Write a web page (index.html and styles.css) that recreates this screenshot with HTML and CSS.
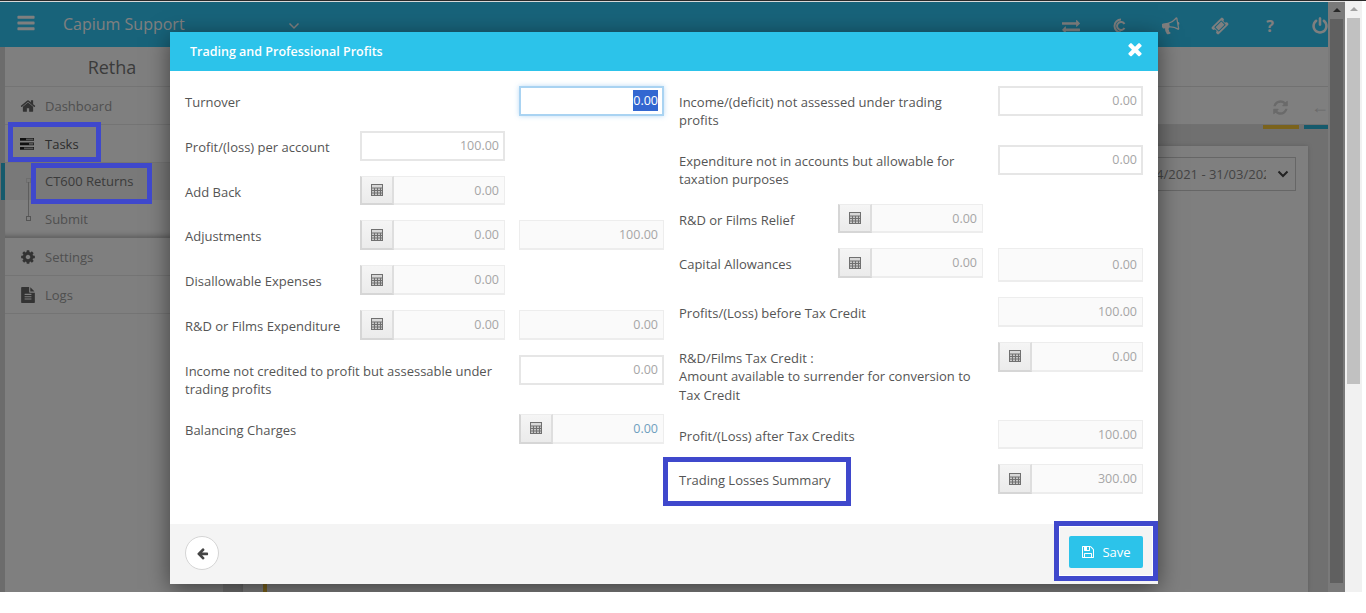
FILE: index.html
```html
<!DOCTYPE html>
<html lang="en">
<head>
<meta charset="utf-8">
<title>Trading and Professional Profits</title>
<link rel="stylesheet" href="styles.css">
</head>
<body>
<svg class="sprite" xmlns="http://www.w3.org/2000/svg">
  <symbol id="i-bars" viewBox="0 0 1792 1792"><path d="M1664 1344v128q0 26-19 45t-45 19h-1408q-26 0-45-19t-19-45v-128q0-26 19-45t45-19h1408q26 0 45 19t19 45zm0-512v128q0 26-19 45t-45 19h-1408q-26 0-45-19t-19-45v-128q0-26 19-45t45-19h1408q26 0 45 19t19 45zm0-512v128q0 26-19 45t-45 19h-1408q-26 0-45-19t-19-45v-128q0-26 19-45t45-19h1408q26 0 45 19t19 45z"/></symbol>
  <symbol id="i-home" viewBox="0 0 1792 1792"><path d="M1472 992v480q0 26-19 45t-45 19h-384v-384h-256v384h-384q-26 0-45-19t-19-45v-480q0-1 .5-3t.5-3l575-474 575 474q1 2 1 6zm223-69l-62 74q-8 9-21 11h-3q-13 0-21-7l-692-577-692 577q-12 8-24 7-13-2-21-11l-62-74q-8-10-7-23.5t11-21.5l719-599q32-26 76-26t76 26l244 204v-195q0-14 9-23t23-9h192q14 0 23 9t9 23v408l219 182q10 8 11 21.5t-7 23.5z"/></symbol>
  <symbol id="i-cog" viewBox="0 0 1792 1792"><path d="M1152 896q0-106-75-181t-181-75-181 75-75 181 75 181 181 75 181-75 75-181zm512-109v222q0 12-8 23t-20 13l-185 28q-19 54-39 91 35 50 107 138 10 12 10 25t-9 23q-27 37-99 108t-94 71q-12 0-26-9l-138-108q-44 23-91 38-16 136-29 186-7 28-36 28h-222q-14 0-24.5-8.5t-11.5-21.5l-28-184q-49-16-90-37l-141 107q-10 9-25 9-14 0-25-11-126-114-165-168-7-10-7-23 0-12 8-23 15-21 51-66.5t54-70.5q-27-50-41-99l-183-27q-13-2-21-12.5t-8-23.5v-222q0-12 8-23t19-13l186-28q14-46 39-92-40-57-107-138-10-12-10-24 0-10 9-23 26-36 98.5-107.5t94.5-71.5q13 0 26 10l138 107q44-23 91-38 16-136 29-186 7-28 36-28h222q14 0 24.5 8.5t11.5 21.5l28 184q49 16 90 37l142-107q9-9 24-9 13 0 25 10 129 119 165 170 7 8 7 22 0 12-8 23-15 21-51 66.5t-54 70.5q26 50 41 98l183 28q13 2 21 12.5t8 23.5z"/></symbol>
  <symbol id="i-file" viewBox="0 0 1792 1792"><path d="M1596 476q14 14 28 36h-472v-472q22 14 36 28zm-476 164h544v1056q0 40-28 68t-68 28h-1344q-40 0-68-28t-28-68v-1600q0-40 28-68t68-28h800v544q0 40 28 68t68 28zm160 736v-64q0-14-9-23t-23-9h-704q-14 0-23 9t-9 23v64q0 14 9 23t23 9h704q14 0 23-9t9-23zm0-256v-64q0-14-9-23t-23-9h-704q-14 0-23 9t-9 23v64q0 14 9 23t23 9h704q14 0 23-9t9-23zm0-256v-64q0-14-9-23t-23-9h-704q-14 0-23 9t-9 23v64q0 14 9 23t23 9h704q14 0 23-9t9-23z"/></symbol>
  <symbol id="i-left" viewBox="0 0 1792 1792"><path d="M1664 896v128q0 53-32.5 90.5t-84.5 37.5h-704l293 294q38 36 38 90t-38 90l-75 76q-37 37-90 37-52 0-91-37l-651-652q-37-37-37-90 0-52 37-91l651-650q38-38 91-38 52 0 90 38l75 74q38 38 38 91t-38 91l-293 293h704q52 0 84.5 37.5t32.5 90.5z"/></symbol>
  <symbol id="i-times" viewBox="0 0 1792 1792"><path d="M1490 1322q0 40-28 68l-136 136q-28 28-68 28t-68-28l-294-294-294 294q-28 28-68 28t-68-28l-136-136q-28-28-28-68t28-68l294-294-294-294q-28-28-28-68t28-68l136-136q28-28 68-28t68 28l294 294 294-294q28-28 68-28t68 28l136 136q28 28 28 68t-28 68l-294 294 294 294q28 28 28 68z"/></symbol>
  <symbol id="i-power" viewBox="0 0 1792 1792"><path d="M1664 896q0 156-61 298t-164 245-245 164-298 61-298-61-245-164-164-245-61-298q0-182 80.5-343t226.5-270q43-32 95.5-25t83.5 50q32 42 24.5 94.5t-49.5 84.5q-98 74-151.5 181t-53.5 228q0 104 40.5 198.5t109.5 163.5 163.5 109.5 198.5 40.5 198.5-40.5 163.5-109.5 109.5-163.5 40.5-198.5q0-121-53.5-228t-151.5-181q-42-32-49.5-84.5t24.5-94.5q31-43 84-50t95 25q146 109 226.5 270t80.5 343zm-640-768v640q0 52-38 90t-90 38-90-38-38-90v-640q0-52 38-90t90-38 90 38 38 90z"/></symbol>
  <symbol id="i-floppy" viewBox="0 0 1792 1792"><path d="M512 1536h768v-384h-768v384zm896 0h128v-896q0-14-10-38.5t-20-34.5l-281-281q-10-10-34-20t-39-10v416q0 40-28 68t-68 28h-576q-40 0-68-28t-28-68v-416h-128v1280h128v-416q0-40 28-68t68-28h832q40 0 68 28t28 68v416zm-384-928v-320q0-13-9.5-22.5t-22.5-9.5h-192q-13 0-22.5 9.5t-9.5 22.5v320q0 13 9.5 22.5t22.5 9.5h192q13 0 22.5-9.5t9.5-22.5zm640 32v928q0 40-28 68t-68 28h-1344q-40 0-68-28t-28-68v-1344q0-40 28-68t68-28h928q40 0 88 20t76 48l280 280q28 28 48 76t20 88z"/></symbol>
  <symbol id="i-refresh" viewBox="0 0 1792 1792"><path d="M1639 1056q0 5-1 7-64 268-268 434.5t-478 166.5q-146 0-282.5-55t-243.5-157l-129 129q-19 19-45 19t-45-19-19-45v-448q0-26 19-45t45-19h448q26 0 45 19t19 45-19 45l-137 137q71 66 161 102t187 36q134 0 250-65t186-179q11-17 53-117 8-23 30-23h192q13 0 22.5 9.5t9.5 22.5zm25-800v448q0 26-19 45t-45 19h-448q-26 0-45-19t-19-45 19-45l138-138q-148-137-349-137-134 0-250 65t-186 179q-11 17-53 117-8 23-30 23h-199q-13 0-22.5-9.5t-9.5-22.5v-7q65-268 270-434.5t480-166.5q146 0 284 55.5t245 156.5l130-129q19-19 45-19t45 19 19 45z"/></symbol>
  <symbol id="i-exchange" viewBox="0 0 1792 1792"><path d="M1792 1184v192q0 13-9.5 22.5t-22.5 9.5h-1376v192q0 13-9.5 22.5t-22.5 9.5q-12 0-24-10l-319-320q-9-9-9-22 0-14 9-23l320-320q9-9 23-9 13 0 22.5 9.5t9.5 22.5v192h1376q13 0 22.5 9.5t9.5 22.5zm0-544q0 14-9 23l-320 320q-9 9-23 9-13 0-22.5-9.5t-9.5-22.5v-192h-1376q-13 0-22.5-9.5t-9.5-22.5v-192q0-13 9.5-22.5t22.5-9.5h1376v-192q0-14 9-23t23-9q12 0 24 10l319 319q9 9 9 23z"/></symbol>
  <symbol id="i-bullhorn" viewBox="0 0 1792 1792"><path d="M1664 640q53 0 90.5 37.5t37.5 90.5-37.5 90.5-90.5 37.5v384q0 52-38 90t-90 38q-417-347-812-380-58 19-91 66t-31 100.5 40 92.5q-20 33-23 65.5t6 58 33.5 55 48 50 61.5 50.5q-29 58-111.5 83t-168.5 11.5-132-55.5q-7-23-29.500-87.500t-32-94.500-23-89-15-101 3.500-98.500 22-110.500h-122q-66 0-113-47t-47-113v-192q0-66 47-113t113-47h480q435 0 896-384 52 0 90 38t38 90v384zm-128 604v-954q-394 302-768 343v270q377 42 768 341z"/></symbol>
  <symbol id="i-ticket" viewBox="0 0 1792 1792"><path d="M1024 452l316 316-572 572-316-316zm-211 979l618-618q19-19 19-45t-19-45l-362-362q-18-18-45-18t-45 18l-618 618q-19 19-19 45t19 45l362 362q18 18 45 18t45-18zm889-637l-907 908q-37 37-90.500 37t-90.500-37l-126-126q56-56 56-136t-56-136-136-56-136 56l-125-126q-37-37-37-90.500t37-90.500l907-906q37-37 90.500-37t90.500 37l125 125q-56 56-56 136t56 136 136 56 136-56l126 125q37 37 37 90.500t-37 90.500z"/></symbol>
  <symbol id="i-calc" viewBox="0 0 14 14"><path class="calc-body" d="M1 1h12v12H1z"/><path class="calc-top" d="M2 2h10v2.500H2z"/><path class="calc-keys" d="M2 5.500h2v1.500H2zM5 5.500h2v1.500H5zM8 5.500h2v1.500H8zM11 5.500h1v1.500h-1zM2 8h2v1.500H2zM5 8h2v1.500H5zM8 8h2v1.500H8zM11 8h1v1.500h-1zM2 10.500h2V12H2zM5 10.500h2V12H5zM8 10.500h2V12H8zM11 10.500h1V12h-1z"/></symbol>
</svg>

<div class="window">
  <div class="app">
    <div class="page">
      <header class="topbar">
        <svg class="ic ic-bars"><use href="#i-bars"/></svg>
        <span class="brand">Capium Support</span>
        <svg class="chev" viewBox="0 0 12 8"><path d="M1.500 1.500 6 6l4.500-4.500"/></svg>
        <nav class="top-icons">
          <svg class="ic ic-top"><use href="#i-exchange"/></svg>
          <svg class="ic ic-top copy" viewBox="0 0 18 18"><path d="M9 2.500a6.500 6.500 0 1 0 0 13M12.500 7A4 4 0 1 0 12.500 11"/></svg>
          <svg class="ic ic-top horn"><use href="#i-bullhorn"/></svg>
          <svg class="ic ic-top"><use href="#i-ticket"/></svg>
          <span class="qmark">?</span>
          <svg class="ic ic-top"><use href="#i-power"/></svg>
        </nav>
      </header>
      <div class="main">
        <aside class="sidebar">
          <div class="client">Retha</div>
          <a class="nav"><svg class="ic ic-nav"><use href="#i-home"/></svg>Dashboard</a>
          <a class="nav nav-dark"><svg class="tasks" viewBox="0 0 14 12"><path class="tasks-a" d="M0 0h14v2.800H0zM0 4.500h14v2.800H0zM0 9h14v2.800H0z"/><path class="tasks-b" d="M6 .6h7.400v1.600H6zM9 5.100h4.400v1.600H9zM4 9.600h9.400v1.600H4z"/></svg>Tasks</a>
          <div class="sub">
            <a class="sub-item sub-active"><i class="dot"></i>CT600 Returns</a>
            <a class="sub-item"><i class="dot"></i>Submit</a>
          </div>
          <a class="nav"><svg class="ic ic-nav"><use href="#i-cog"/></svg>Settings</a>
          <a class="nav"><svg class="ic ic-nav"><use href="#i-file"/></svg>Logs</a>
        </aside>
        <section class="content">
          <div class="band"></div>
          <div class="toolbar">
            <svg class="ic ic-tool"><use href="#i-refresh"/></svg>
            <span class="tool-arrow">&#8592;</span>
          </div>
          <div class="tabs"><i class="tab tab-y"></i><i class="tab tab-b"></i></div>
          <div class="card">
            <div class="period"><span class="period-text">01/04/2021 - 31/03/2022</span><svg class="period-chev" viewBox="0 0 12 8"><path d="M1.500 1.500 6 6l4.500-4.500"/></svg></div>
            <i class="timeline"></i>
          </div>
        </section>
      </div>
    </div>
    <div class="inner-scroll"><i class="up"></i><i class="thumb"></i></div>
    <div class="backdrop"></div>

    <div class="modal">
      <div class="modal-head">
        <h2>Trading and Professional Profits</h2>
        <svg class="ic ic-close"><use href="#i-times"/></svg>
      </div>
      <div class="modal-body">
        <div class="col col-l">
          <div class="row"><span class="lbl">Turnover</span><div class="field focus c3"><span class="sel">0.00</span></div></div>
          <div class="row"><span class="lbl">Profit/(loss) per account</span><div class="field c2">100.00</div></div>
          <div class="row"><span class="lbl">Add Back</span><div class="group c2"><button class="calc"><svg class="ic-calc"><use href="#i-calc"/></svg></button><div class="field ro">0.00</div></div></div>
          <div class="row"><span class="lbl">Adjustments</span><div class="group c2"><button class="calc"><svg class="ic-calc"><use href="#i-calc"/></svg></button><div class="field ro">0.00</div></div><div class="field ro c3">100.00</div></div>
          <div class="row"><span class="lbl">Disallowable Expenses</span><div class="group c2"><button class="calc"><svg class="ic-calc"><use href="#i-calc"/></svg></button><div class="field ro">0.00</div></div></div>
          <div class="row"><span class="lbl">R&amp;D or Films Expenditure</span><div class="group c2"><button class="calc"><svg class="ic-calc"><use href="#i-calc"/></svg></button><div class="field ro">0.00</div></div><div class="field ro c3">0.00</div></div>
          <div class="row"><span class="lbl wide">Income not credited to profit but assessable under trading profits</span><div class="field c3">0.00</div></div>
          <div class="row"><span class="lbl">Balancing Charges</span><div class="group c3"><button class="calc"><svg class="ic-calc"><use href="#i-calc"/></svg></button><div class="field ro blue">0.00</div></div></div>
        </div>
        <div class="col col-r">
          <div class="row"><span class="lbl wide">Income/(deficit) not assessed under trading profits</span><div class="field c3">0.00</div></div>
          <div class="row"><span class="lbl wide">Expenditure not in accounts but allowable for taxation purposes</span><div class="field c3">0.00</div></div>
          <div class="row"><span class="lbl">R&amp;D or Films Relief</span><div class="group c2"><button class="calc"><svg class="ic-calc"><use href="#i-calc"/></svg></button><div class="field ro">0.00</div></div></div>
          <div class="row"><span class="lbl">Capital Allowances</span><div class="group c2"><button class="calc"><svg class="ic-calc"><use href="#i-calc"/></svg></button><div class="field ro">0.00</div></div><div class="field ro tall c3">0.00</div></div>
          <div class="row"><span class="lbl wide">Profits/(Loss) before Tax Credit</span><div class="field ro c3">100.00</div></div>
          <div class="row"><span class="lbl wide">R&amp;D/Films Tax Credit :<br>Amount available to surrender for conversion to Tax Credit</span><div class="group c3"><button class="calc"><svg class="ic-calc"><use href="#i-calc"/></svg></button><div class="field ro">0.00</div></div></div>
          <div class="row"><span class="lbl wide">Profit/(Loss) after Tax Credits</span><div class="field ro c3">100.00</div></div>
          <div class="row"><span class="lbl wide">Trading Losses Summary</span><div class="group c3"><button class="calc"><svg class="ic-calc"><use href="#i-calc"/></svg></button><div class="field ro">300.00</div></div></div>
        </div>
      </div>
      <div class="modal-foot">
        <button class="back"><svg class="ic ic-back"><use href="#i-left"/></svg></button>
        <button class="save"><svg class="ic ic-save"><use href="#i-floppy"/></svg>Save</button>
      </div>
    </div>

    <i class="mark mark-tasks"></i>
    <i class="mark mark-ct600"></i>
    <i class="mark mark-losses"></i>
    <i class="mark mark-save"></i>
  </div>
  <div class="outer-scroll"><i class="up"></i><i class="thumb"></i></div>
</div>
</body>
</html>
```

FILE: styles.css
```css
* { box-sizing: border-box; }
html, body { margin: 0; height: 613px; overflow: hidden; background: #fff; }
body { font-family: "Open Sans", "Liberation Sans", sans-serif; font-size: 13px; color: #555; }
.sprite { display: none; }
i { display: block; font-style: normal; }

.window { display: flex; height: 592px; padding-right: 4px; border-top: 1px solid #2a2a2a; }
.app { position: relative; width: 1345px; flex: none; border-top: 1px solid #d8d8d8; display: flex; overflow: hidden; }
.page { width: 1328px; flex: none; display: flex; flex-direction: column; min-height: 0; }

.ic { fill: currentColor; display: block; flex: none; }

/* top bar */
.topbar { height: 45px; flex: none; background: #30c6f4; color: #fff; display: flex; align-items: center; }
.ic-bars { width: 20px; height: 20px; margin: -3px 0 0 16px; }
.brand { font-size: 16px; margin: -2px 0 0 27px; width: 225px; }
.chev { width: 12px; height: 8px; fill: none; stroke: #fff; stroke-width: 1.500; margin-top: 2px; }
.top-icons { margin-left: auto; margin-right: -1px; margin-top: 2px; display: flex; align-items: center; width: 267px; justify-content: space-between; color: #fff; }
.ic-top { width: 18px; height: 18px; }
.horn { transform: rotate(-10deg); }
.copy { fill: none; stroke: #fff; stroke-width: 2; }
.qmark { font-weight: 700; font-size: 16px; width: 18px; text-align: center; }

/* page under the dialog */
.main { flex: 1; display: flex; min-height: 0; }
.sidebar { width: 223px; flex: none; border-left: 5px solid #d8d8d8; background: #fff; color: #a0a0a0; }
.client { height: 40px; border-bottom: 1px solid #e8e8e8; text-align: center; font-size: 18px; line-height: 40px; color: #777; padding-right: 4px; }
.nav { display: flex; align-items: center; height: 38px; padding-left: 15px; border-bottom: 1px solid #e8e8e8; }
.nav-dark { color: #5a5a5a; }
.ic-nav { width: 16px; height: 16px; margin-right: 9px; color: #666; }
.tasks { width: 14px; height: 12px; margin-right: 11px; }
.tasks-a { fill: #222; }
.tasks-b { fill: #aaa; }
.sub { border-bottom: 1px solid #ccc; box-shadow: inset 0 6px 6px -6px #999, inset 0 -6px 6px -6px #999; }
.sub-item { display: flex; align-items: center; height: 37px; padding-left: 21px; position: relative; }
.sub-active { background: #f2f2f2; color: #777; margin-left: -4px; border-left: 4px solid #2bb5d8; padding-bottom: 2px; }
.dot { width: 5px; height: 5px; border: 1px solid #aaa; margin-right: 14px; }
.sub-active .dot { border-color: #ddd; }
.sub-item:last-child::before { content: ""; position: absolute; left: 23px; top: -18px; height: 34px; border-left: 1px solid #bbb; }

.content { flex: 1; min-width: 0; background: #e0e0e0; display: flex; flex-direction: column; }
.band { height: 40px; flex: none; background: #fff; border-bottom: 1px solid #e2e2e2; }
.toolbar { height: 38px; flex: none; background: #fff; display: flex; justify-content: flex-end; align-items: center; padding-top: 4px; gap: 22px; color: #d4d4d4; border-bottom: 1px solid #e2e2e2; }
.ic-tool { width: 17px; height: 17px; }
.tool-arrow { font-size: 18px; width: 17px; color: #d4d4d4; margin-top: -3px; overflow: hidden; }
.tabs { display: flex; justify-content: flex-end; gap: 5px; flex: none; }
.tab { height: 4px; }
.tab-y { width: 36px; background: #f6c638; }
.tab-b { width: 24px; background: #2bb5d8; }
.card { flex: 1; margin: 17px 20px 0 20px; background: #fff; box-shadow: 0 0 4px #bbb; padding: 11px 12px 0 20px; display: flex; flex-direction: column; }
.period { align-self: flex-end; width: 240px; height: 34px; border: 1px solid #ccc; display: flex; align-items: center; justify-content: flex-end; padding-right: 6px; color: #888; font-size: 13px; }
.period-text { width: 137px; margin-right: 11px; white-space: nowrap; overflow: hidden; flex: none; }
.period-chev { width: 12px; height: 8px; fill: none; stroke: #444; stroke-width: 2; flex: none; }
.timeline { flex: 1; width: 4px; margin-top: 10px; background: #f6c638; }
.inner-scroll { width: 17px; flex: none; background: #f4f4f4; padding: 0 2px 9px; display: flex; flex-direction: column; }
.up { width: 0; height: 0; border: 4px solid transparent; border-top: 0; border-bottom: 4px solid #505050; margin: 6px auto 7px; flex: none; }
.thumb { flex: 1; background: #c1c1c1; }

.backdrop { position: absolute; inset: 0; background: rgba(0, 0, 0, .5); }

/* dialog */
.modal { position: absolute; left: 170px; top: 30px; width: 988px; height: 552px; background: #fff; display: flex; flex-direction: column; box-shadow: 0 5px 22px rgba(0, 0, 0, .5); }
.modal-head { height: 39px; flex: none; background: #2cc3ea; color: #fff; display: flex; align-items: center; justify-content: space-between; padding: 0 13px 1px 20px; }
.modal-head h2 { margin: 0; font-size: 12.500px; font-weight: 600; }
.ic-close { width: 20px; height: 20px; margin-top: -4px; }
.modal-body { flex: 1; display: flex; padding: 15px 0 0 15px; min-height: 0; }
.col { display: flex; flex-direction: column; gap: 15px; flex: none; }
.col-l { width: 494px; }
.row { display: grid; align-items: start; }
.col-l .row { grid-template-columns: 175px 159px 145px; }
.col-r .row { grid-template-columns: 159px 160px 145px; }
.lbl { grid-column: 1; padding-top: 7px; line-height: 18.570px; color: #555; white-space: nowrap; }
.lbl.wide { grid-column: 1 / 3; white-space: normal; padding-right: 12px; }
.col-r .lbl.wide { padding-right: 24px; }
.col-r .row:nth-child(-n+2) .lbl { padding-top: 6.700px; }
.c2 { grid-column: 2; grid-row: 1; }
.c3 { grid-column: 3; grid-row: 1; }
.field { width: 145px; height: 29.800px; border: 2px solid #e6e6e6; background: #fff; text-align: right; padding-right: 4px; line-height: 25px; font-size: 12.500px; color: #a6a6a6; }
.ro { background: #fafafa; border-width: 1px 1px 2px; border-color: #ededed; padding-right: 5px; line-height: 27px; }
.tall { height: 33.600px; line-height: 32px; }
.blue { color: #6f9fbe; }
.focus { border: 2px solid #a9d3f2; box-shadow: 0 0 5px rgba(102, 175, 233, .45); color: #fff; }
.sel { background: #3367d1; color: #fff; padding: 2px 0; }
.group { display: flex; width: 145px; }
.group .field { flex: 1; width: auto; min-width: 0; border-left: 0; }
.calc { width: 34px; height: 29.800px; flex: none; border-style: solid; border-width: 1px 2px 2px 2px; border-color: #ececec #dedede #d6d6d6 #d6d6d6; background: linear-gradient(#f5f5f5, #ebebeb); padding: 0; display: flex; align-items: center; justify-content: center; }
.ic-calc { width: 14px; height: 14px; display: block; }
.calc-body { fill: #707070; }
.calc-top { fill: #d8d8d8; }
.calc-keys { fill: #c8c8c8; }
.modal-foot { height: 60px; flex: none; background: #f4f4f4; display: flex; align-items: flex-start; justify-content: space-between; padding: 12px 15px 0 15px; }
.back { width: 34px; height: 34px; border-radius: 50%; border: 1px solid #d5d5d5; background: #fff; color: #444; padding: 0; display: flex; align-items: center; justify-content: center; }
.ic-back { width: 13px; height: 13px; }
.save { width: 74px; height: 32px; border: 0; border-radius: 2px; background: #2cc3ea; color: #fff; font: 400 13px "Open Sans", sans-serif; display: flex; align-items: center; justify-content: center; gap: 7px; padding: 0; }
.ic-save { width: 14px; height: 14px; }

/* annotation rectangles drawn on the screenshot */
.mark { position: absolute; border: 5px solid #3f48cc; }
.mark-tasks { left: 8px; top: 120px; width: 93px; height: 40px; }
.mark-ct600 { left: 31px; top: 161px; width: 121px; height: 41px; }
.mark-losses { left: 663px; top: 455px; width: 188px; height: 49px; }
.mark-save { left: 1054px; top: 519px; width: 104px; height: 60px; box-shadow: inset 0 0 0 1px #fff; }

.outer-scroll { width: 17px; flex: none; background: #f1f1f1; padding: 0 2px; display: flex; flex-direction: column; }
.outer-scroll .up { border-bottom-color: #a3a3a3; }
.outer-scroll .thumb { flex: none; height: 366px; background: #c1c1c1; }
```
